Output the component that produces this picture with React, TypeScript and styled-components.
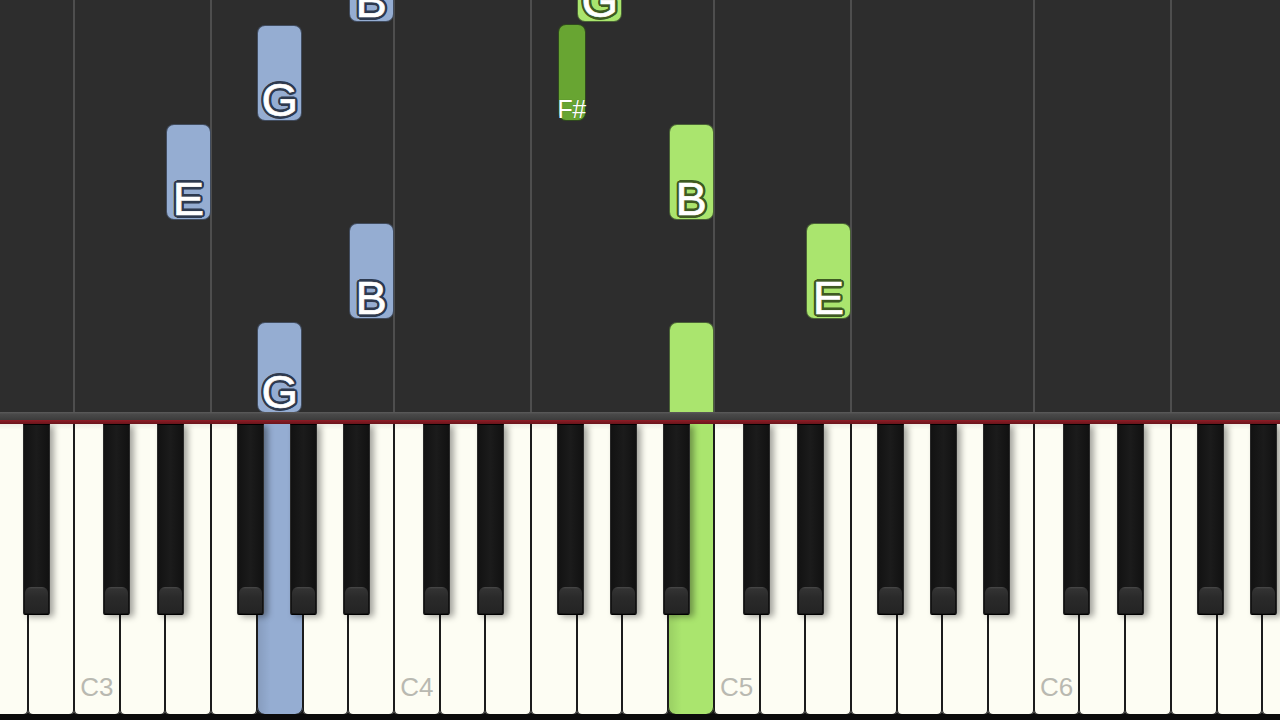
import React from "react";
import styled, { createGlobalStyle, css } from "styled-components";

const GlobalStyle = createGlobalStyle`
  html, body { margin: 0; padding: 0; background: #000; overflow: hidden; }
  #root { width: 1280px; height: 720px; }
`;

const WK = 320 / 7;
const C3X = 74;
const NAMES = ["C", "D", "E", "F", "G", "A", "B"];
const BLACK_OFFSETS = [29, 83, 163, 216, 269];

const ring = (color: string, r: number) => {
  const out: string[] = [];
  for (let i = 0; i < 16; i++) {
    const a = (i / 16) * Math.PI * 2;
    out.push(`${(Math.cos(a) * r).toFixed(2)}px ${(Math.sin(a) * r).toFixed(2)}px 0 ${color}`);
  }
  return out.join(", ");
};

type Tone = "blue" | "green" | "dark";

const TONES: Record<Tone, { fill: string; ink: string }> = {
  blue: { fill: "#95add2", ink: "#2e3a4f" },
  green: { fill: "#aae56e", ink: "#3e5a22" },
  dark: { fill: "#68a532", ink: "#2f4d14" },
};

const Screen = styled.div`
  width: 1280px;
  height: 720px;
  display: flex;
  flex-direction: column;
  background: #000;
  overflow: hidden;
  font-family: "Liberation Sans", Arial, sans-serif;
`;

const Roll = styled.div`
  position: relative;
  height: 412px;
  flex: none;
  background: #2d2d2d;
  overflow: hidden;
`;

const GridLine = styled.div`
  position: absolute;
  top: 0;
  bottom: 0;
  width: 2px;
  background: #4e4e4e;
`;

const NoteBar = styled.div<{ $tone: Tone }>`
  position: absolute;
  box-sizing: border-box;
  display: flex;
  flex-direction: column;
  justify-content: flex-end;
  align-items: center;
  border-radius: 8px;
  border: 1px solid rgba(10, 12, 16, 0.6);
  background: ${(p) => TONES[p.$tone].fill};
  overflow: visible;
`;

const NoteLetter = styled.span<{ $tone: Tone }>`
  font-family: "Liberation Sans", Arial, sans-serif;
  font-size: 47px;
  line-height: 47px;
  margin-bottom: -3px;
  color: #fff;
  -webkit-text-stroke: 0.7px #fff;
  text-shadow: ${(p) => ring(TONES[p.$tone].ink, 2.6)}, ${(p) => ring(TONES[p.$tone].ink, 1.4)};
`;

const SmallLetter = styled.span`
  font-family: "Liberation Sans", Arial, sans-serif;
  font-size: 25px;
  line-height: 25px;
  margin-bottom: -2px;
  color: #fff;
  letter-spacing: -0.5px;
  text-shadow: 0 0 1px rgba(0, 0, 0, 0.4);
  white-space: nowrap;
`;

const Rail = styled.div`
  height: 8px;
  flex: none;
  background: linear-gradient(#5c5c5c 0, #4a4a4a 2px, #3c3c3c 100%);
`;

const RedLine = styled.div`
  height: 4px;
  flex: none;
  background: linear-gradient(#8e1d26, #6a141b);
`;

const Keyboard = styled.div`
  position: relative;
  height: 290px;
  flex: none;
  background: #151515;
  overflow: hidden;
`;

const WhiteRow = styled.div`
  display: flex;
  height: 100%;
  margin-left: ${C3X - 2 * WK}px;
`;

const WhiteKey = styled.div<{ $tone?: Tone }>`
  flex: none;
  width: ${WK}px;
  height: 100%;
  box-sizing: border-box;
  display: flex;
  flex-direction: column;
  justify-content: flex-end;
  align-items: center;
  padding-bottom: 14px;
  border-radius: 0 0 4px 4px;
  background: linear-gradient(rgba(0, 0, 0, 0.06), rgba(0, 0, 0, 0) 6px), #fdfdf3;
  box-shadow: inset 1px 0 0 #1c1c1c, inset -1px 0 0 #1c1c1c;
  ${(p) =>
    p.$tone &&
    css`
      border-radius: 0 0 7px 7px;
      background: linear-gradient(90deg, rgba(0, 0, 0, 0.1), rgba(0, 0, 0, 0) 30%), ${TONES[p.$tone].fill};
    `}
`;

const KeyLabel = styled.span`
  font-family: "Liberation Sans", Arial, sans-serif;
  font-size: 26px;
  line-height: 26px;
  color: #b9b9b1;
`;

const BlackKey = styled.div`
  position: absolute;
  top: 0;
  width: 27px;
  height: 191px;
  box-sizing: border-box;
  border: 1px solid #000;
  border-left-color: #2a2a2a;
  border-right-color: #2a2a2a;
  border-radius: 0 0 2px 2px;
  background: linear-gradient(90deg, #121212, #1b1b1b 50%, #111);
  box-shadow: 4px 2px 6px rgba(0, 0, 0, 0.35);
  display: flex;
  flex-direction: column;
  justify-content: flex-end;
`;

const BlackFront = styled.div`
  height: 26px;
  margin: 0 1px 1px;
  border-radius: 6px 6px 1px 1px;
  background: linear-gradient(#4a4a4a 0, #333 2px, #2a2a2a 40%, #242424 100%);
`;

const BottomStrip = styled.div`
  flex: 1;
  background: #0b0b0b;
`;

type NoteData = { x: number; y: number; h: number; w?: number; tone: Tone; label?: string; small?: boolean };

const whiteX = (name: string, octave: number) => C3X + (octave - 3) * 320 + NAMES.indexOf(name) * WK;

const NOTES: NoteData[] = [
  { x: whiteX("B", 3), y: -74, h: 96, tone: "blue", label: "B" },
  { x: whiteX("G", 4), y: -74, h: 96, tone: "green", label: "G" },
  { x: whiteX("G", 3), y: 25, h: 96, tone: "blue", label: "G" },
  { x: C3X + 320 + 163, y: 24, h: 97, w: 28, tone: "dark", label: "F#", small: true },
  { x: whiteX("E", 3), y: 124, h: 96, tone: "blue", label: "E" },
  { x: whiteX("B", 4), y: 124, h: 96, tone: "green", label: "B" },
  { x: whiteX("B", 3), y: 223, h: 96, tone: "blue", label: "B" },
  { x: whiteX("E", 5), y: 223, h: 96, tone: "green", label: "E" },
  { x: whiteX("G", 3), y: 322, h: 91, tone: "blue", label: "G" },
  { x: whiteX("B", 4), y: 322, h: 100, tone: "green" },
];

const GRID = [3, 4, 5, 6].flatMap((o) => [whiteX("C", o), whiteX("F", o)]);

const PRESSED: Record<string, Tone> = { G3: "blue", B4: "green" };

const whiteKeys = (() => {
  const keys: { id: string; label?: string }[] = [];
  let idx = 5;
  let oct = 2;
  for (let i = 0; i < 30; i++) {
    const n = NAMES[idx];
    keys.push({ id: `${n}${oct}`, label: n === "C" ? `C${oct}` : undefined });
    idx++;
    if (idx === 7) {
      idx = 0;
      oct++;
    }
  }
  return keys;
})();

const blackKeys = [2, 3, 4, 5, 6]
  .flatMap((o) => BLACK_OFFSETS.map((off) => C3X + (o - 3) * 320 + off))
  .filter((x) => x > -30 && x < 1280);

export default function App() {
  return (
    <>
      <GlobalStyle />
      <Screen>
        <Roll>
          {GRID.map((x) => (
            <GridLine key={x} style={{ left: x - 1 }} />
          ))}
          {NOTES.map((n, i) => (
            <NoteBar
              key={i}
              $tone={n.tone}
              style={{ left: n.x + 0.5, top: n.y, height: n.h, width: n.w ?? 45 }}
            >
              {n.label &&
                (n.small ? (
                  <SmallLetter>{n.label}</SmallLetter>
                ) : (
                  <NoteLetter $tone={n.tone}>{n.label}</NoteLetter>
                ))}
            </NoteBar>
          ))}
        </Roll>
        <Rail />
        <RedLine />
        <Keyboard>
          <WhiteRow>
            {whiteKeys.map((k) => (
              <WhiteKey key={k.id} $tone={PRESSED[k.id]}>
                {k.label && <KeyLabel>{k.label}</KeyLabel>}
              </WhiteKey>
            ))}
          </WhiteRow>
          {blackKeys.map((x) => (
            <BlackKey key={x} style={{ left: x }}>
              <BlackFront />
            </BlackKey>
          ))}
        </Keyboard>
        <BottomStrip />
      </Screen>
    </>
  );
}
